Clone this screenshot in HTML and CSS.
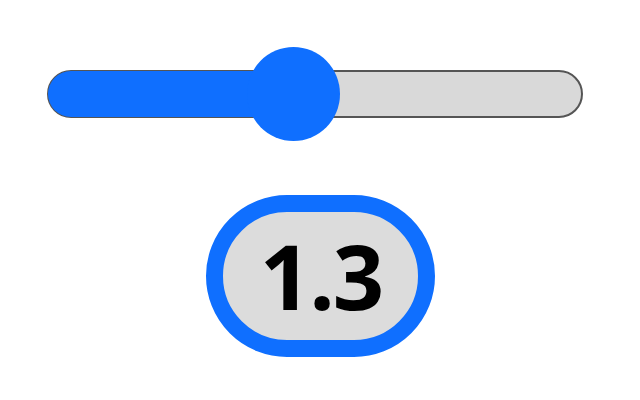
FILE: index.html
```html
<!DOCTYPE html>
<html lang="en">
<head>
<meta charset="utf-8">
<title>Range value</title>
<link rel="stylesheet" href="styles.css">
</head>
<body>
<main class="page">
  <div class="slider" role="slider" aria-valuemin="0" aria-valuemax="5" aria-valuenow="1.3">
    <div class="track">
      <div class="fill" style="width: 246px"></div>
    </div>
    <div class="thumb" style="left: 200px"></div>
  </div>
  <output class="value">1.3</output>
</main>
</body>
</html>
```
FILE: styles.css
```css
html, body {
  margin: 0;
  background: #ffffff;
}

body {
  font-family: "Open Sans", "Noto Sans", "DejaVu Sans", sans-serif;
}

.page {
  width: 640px;
  height: 400px;
  padding-top: 47px;
  box-sizing: border-box;
  display: flex;
  flex-direction: column;
  align-items: center;
}

.slider {
  position: relative;
  align-self: flex-start;
  margin-left: 47px;
  width: 536px;
  height: 94px;
  display: flex;
  align-items: center;
}

.track {
  position: relative;
  width: 100%;
  height: 48px;
  box-sizing: border-box;
  border: 2px solid #555555;
  border-radius: 24px;
  background: #d9d9d9;
}

.fill {
  position: absolute;
  left: -1px;
  top: -1px;
  height: 46px;
  border-radius: 23px;
  background: #0f6fff;
}

.thumb {
  position: absolute;
  top: 0;
  width: 93px;
  height: 94px;
  border-radius: 50%;
  background: #0f6fff;
}

.value {
  margin-top: 54px;
  width: 229px;
  height: 162px;
  box-sizing: border-box;
  border: 17px solid #0f6fff;
  border-radius: 81px;
  background: #dcdcdc;
  display: flex;
  align-items: center;
  justify-content: center;
  font-size: 90px;
  font-weight: 700;
  letter-spacing: -2px;
  color: #000000;
  line-height: 1;
  padding: 0 0 2px 2px;
}
```
